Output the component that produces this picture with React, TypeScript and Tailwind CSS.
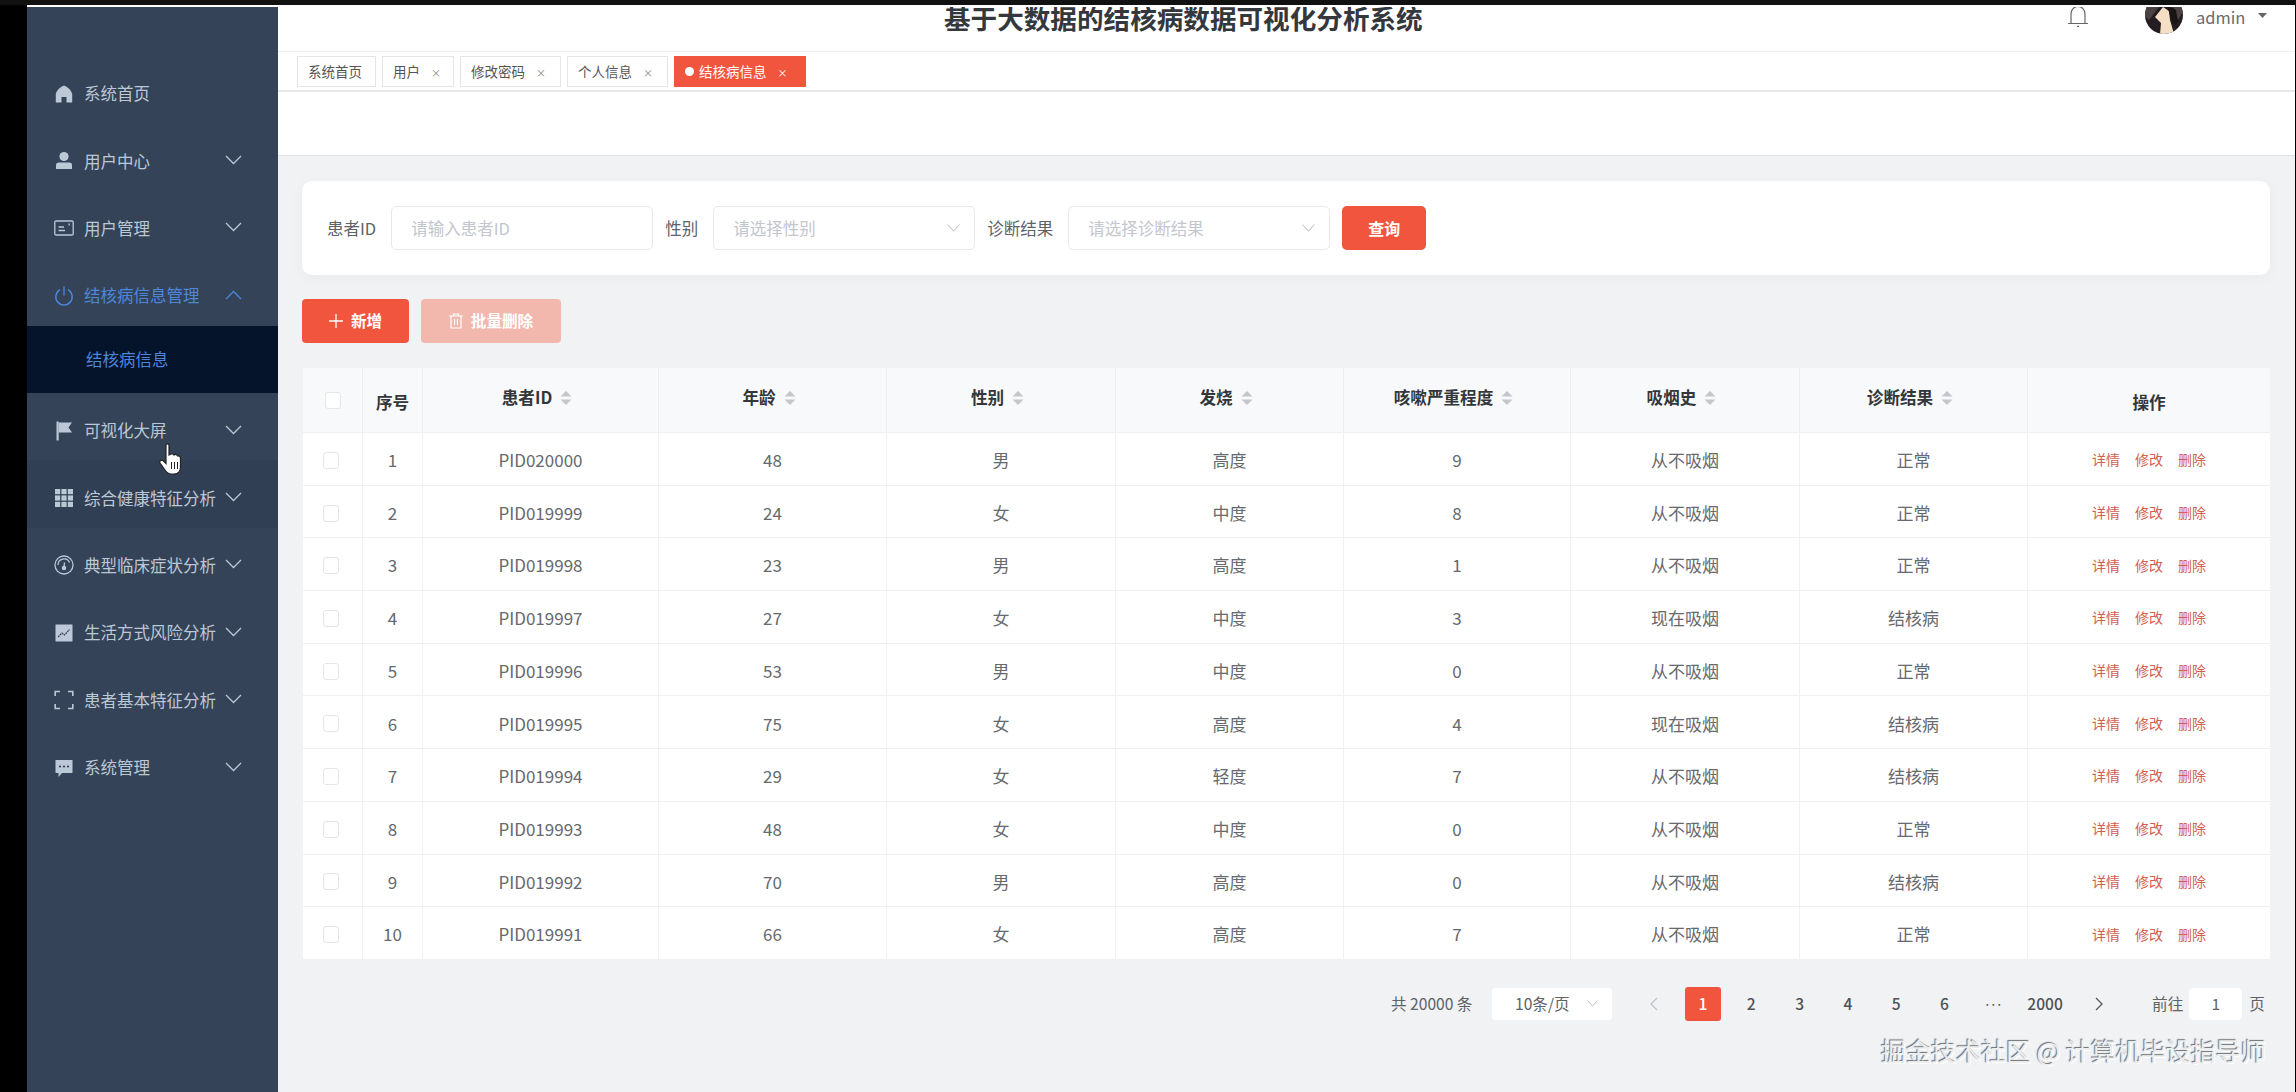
import React from "react";

const FONT = "font-['Noto_Sans_CJK_SC','Noto_Sans',sans-serif]";

const Chevron = ({ up = false }: { up?: boolean }) => (
  <svg width="17" height="10" viewBox="0 0 17 10" fill="none" stroke="currentColor" strokeWidth="1.3" className="shrink-0">
    {up ? <path d="M1 9 L8.5 1.5 L16 9" /> : <path d="M1 1 L8.5 8.5 L16 1" />}
  </svg>
);

const ic = { width: 20, height: 20, viewBox: "0 0 20 20" };
const icons: Record<string, React.ReactNode> = {
  home: (
    <svg {...ic} fill="currentColor"><path d="M10 1.5 C6 3 2.5 6.5 1.8 10 L1.8 18.5 L7.5 18.5 L7.5 13 L12.5 13 L12.5 18.5 L18.2 18.5 L18.2 10 C17.5 6.5 14 3 10 1.5Z" /></svg>
  ),
  user: (
    <svg {...ic} fill="currentColor"><circle cx="10" cy="5.5" r="4.6" /><path d="M2 13.5 C2 12 4 11.5 6 11.5 L14 11.5 C16 11.5 18 12 18 13.5 L18 18 L2 18Z" /></svg>
  ),
  card: (
    <svg {...ic} fill="none" stroke="currentColor" strokeWidth="1.3"><rect x="0.8" y="3" width="18.4" height="14" rx="1.2" /><path d="M4.5 9 H10 M4.5 12.5 H11" /><path d="M14.5 6.5 H15.8" strokeWidth="2" /></svg>
  ),
  power: (
    <svg {...ic} fill="none" stroke="currentColor" strokeWidth="1.4"><path d="M6 3.6 A8.2 8.2 0 1 0 14 3.6" /><path d="M10 0.5 V9.5" /></svg>
  ),
  flag: (
    <svg {...ic} fill="currentColor"><rect x="2.5" y="0.5" width="2.2" height="19" /><path d="M4.7 1.5 H18 L14.5 6.5 L18 11.5 H4.7Z" /></svg>
  ),
  grid: (
    <svg {...ic} fill="currentColor">
      {[1, 7.4, 13.8].flatMap((y) => [1, 7.4, 13.8].map((x) => <rect key={`${x}-${y}`} x={x} y={y} width="5.2" height="5.2" />))}
    </svg>
  ),
  gauge: (
    <svg {...ic} fill="none" stroke="currentColor" strokeWidth="1.3"><circle cx="10" cy="10" r="9" /><path d="M4 10 A6 6 0 0 1 15.5 7.5" /><path d="M10.5 7.5 L10 12" /><circle cx="10" cy="13" r="1.6" fill="currentColor" /></svg>
  ),
  chart: (
    <svg {...ic}><rect x="1.5" y="1.5" width="17" height="17" fill="currentColor" /><path d="M4 14 L8 10 L10.5 12 L15.5 6.5" fill="none" stroke="#344358" strokeWidth="1.2" strokeDasharray="2 0.6" /></svg>
  ),
  full: (
    <svg {...ic} fill="none" stroke="currentColor" strokeWidth="1.6"><path d="M6 1.5 H1.2 V6 M14 1.5 H18.8 V6 M1.2 14 V18.5 H6 M18.8 14 V18.5 H14" /></svg>
  ),
  chat: (
    <svg {...ic} fill="currentColor"><path d="M1.5 2 H18.5 V15 H8 L4.5 19 V15 H1.5Z" /><circle cx="6" cy="8.5" r="1.1" fill="#344358" /><circle cx="10" cy="8.5" r="1.1" fill="#344358" /><circle cx="14" cy="8.5" r="1.1" fill="#344358" /></svg>
  ),
};

const MenuRow = ({ icon, label, arrow = true, active = false, hover = false }: { icon: string; label: string; arrow?: boolean; active?: boolean; hover?: boolean }) => (
  <div className={`flex h-[67.4px] items-center pl-[27px] pr-[36px] pt-[8px] text-[16.5px] ${active ? "text-[#4b87dc]" : "text-[#bcc8d6]"} ${hover ? "bg-[#303f54]" : ""}`}>
    <span className="flex w-[20px] shrink-0 justify-center">{icons[icon]}</span>
    <span className="ml-[10px] flex-1 whitespace-nowrap">{label}</span>
    {arrow && <span className="-mt-[2px] flex"><Chevron up={active} /></span>}
  </div>
);

const Tab = ({ label, w, close = true, active = false }: { label: string; w: string; close?: boolean; active?: boolean }) => (
  <div className={`flex h-[31px] items-center border text-[13.5px] ${w} pl-[10px] ${active ? "border-[#f2553d] bg-[#f2553d] text-white" : "border-[#e3e5e8] bg-white text-[#555]"}`}>
    {active && <span className="mr-[5px] h-[9px] w-[9px] rounded-full bg-white" />}
    <span className="whitespace-nowrap">{label}</span>
    {close && <span className={`ml-[11px] mt-[2px] text-[10px] leading-none ${active ? "text-white" : "text-[#888]"}`}>×</span>}
  </div>
);

const Field = ({ placeholder, select = true }: { placeholder: string; select?: boolean }) => (
  <div className="flex h-[44px] w-[262px] items-center justify-between rounded-[5px] border border-[#e6e8ec] bg-white pl-[19px] pr-[14px] text-[16.5px] text-[#c3c6cc]">
    <span>{placeholder}</span>
    {select && (
      <svg width="13" height="8" viewBox="0 0 13 8" fill="none" stroke="#c4c7cd" strokeWidth="1.1" className="shrink-0"><path d="M0.5 0.5 L6.5 7 L12.5 0.5" /></svg>
    )}
  </div>
);

const Sort = () => (
  <svg width="12" height="16" viewBox="0 0 12 16" fill="#c3c6cc" className="ml-[8px] mt-[1px] shrink-0"><path d="M6 1 L11.5 6.5 H0.5Z" /><path d="M6 15 L11.5 9.5 H0.5Z" /></svg>
);

const GRID = "grid grid-cols-[60px_60px_236px_228px_229px_228px_227px_229px_228px_1fr]";

const headers = ["患者ID", "年龄", "性别", "发烧", "咳嗽严重程度", "吸烟史", "诊断结果"];
const rows: string[][] = [
  ["1", "PID020000", "48", "男", "高度", "9", "从不吸烟", "正常"],
  ["2", "PID019999", "24", "女", "中度", "8", "从不吸烟", "正常"],
  ["3", "PID019998", "23", "男", "高度", "1", "从不吸烟", "正常"],
  ["4", "PID019997", "27", "女", "中度", "3", "现在吸烟", "结核病"],
  ["5", "PID019996", "53", "男", "中度", "0", "从不吸烟", "正常"],
  ["6", "PID019995", "75", "女", "高度", "4", "现在吸烟", "结核病"],
  ["7", "PID019994", "29", "女", "轻度", "7", "从不吸烟", "结核病"],
  ["8", "PID019993", "48", "女", "中度", "0", "从不吸烟", "正常"],
  ["9", "PID019992", "70", "男", "高度", "0", "从不吸烟", "结核病"],
  ["10", "PID019991", "66", "女", "高度", "7", "从不吸烟", "正常"],
];

const Box = () => <span className="block h-[17px] w-[16px] rounded-[3px] border border-[#e4e6ea] bg-white" />;

export default function App() {
  return (
    <div className={`relative h-[1092px] w-[2296px] overflow-hidden bg-black pl-[27px] pt-[5px] ${FONT}`}>
      <div className="absolute left-0 right-0 top-0 h-[5px] bg-[#111]" />
      <div className="flex h-[1087px] w-[2268px] rounded-br-[10px] border-t-2 border-white">
        <aside className="w-[251px] shrink-0 bg-[#344358] pt-[49px]">
          <MenuRow icon="home" label="系统首页" arrow={false} />
          <MenuRow icon="user" label="用户中心" />
          <MenuRow icon="card" label="用户管理" />
          <MenuRow icon="power" label="结核病信息管理" active />
          <div className="flex h-[67.4px] items-center bg-[#05142a] pl-[59px] text-[16.5px] text-[#4d85dc]">结核病信息</div>
          <MenuRow icon="flag" label="可视化大屏" />
          <MenuRow icon="grid" label="综合健康特征分析" hover />
          <MenuRow icon="gauge" label="典型临床症状分析" />
          <MenuRow icon="chart" label="生活方式风险分析" />
          <MenuRow icon="full" label="患者基本特征分析" />
          <MenuRow icon="chat" label="系统管理" />
        </aside>

        <main className="flex min-w-0 flex-1 flex-col bg-[#f1f2f4]">
          <header className="flex h-[45px] shrink-0 items-start overflow-hidden border-b border-[#eceef1] bg-white pl-[666px]">
            <h1 className="mt-[-8px] w-[1123px] whitespace-nowrap text-[26.6px] font-bold leading-[38px] text-[#34383d]">基于大数据的结核病数据可视化分析系统</h1>
            <svg width="22" height="20" viewBox="0 0 22 20" fill="none" stroke="#666" strokeWidth="1.2" className="mt-0 shrink-0">
              <path d="M1 16.5 H21 M4 16.5 V7 A7 7.5 0 0 1 18 7 V16.5" /><path d="M10 19.5 H12" strokeWidth="1.4" />
            </svg>
            <span className="ml-[56px] mt-[-11px] block h-[38px] w-[38px] shrink-0 overflow-hidden rounded-full">
              <svg width="38" height="38" viewBox="0 0 38 38">
                <rect width="38" height="38" fill="#231c20" />
                <path d="M0 0 H38 V16 L33 24 L29 12 L20 9 L14 11 L4 24 L0 20Z" fill="#4a4242" />
                <path d="M10 21 L18 11 L24 15 L25 24 L29 38 L15 38 L16 27Z" fill="#f4dfc4" />
                <path d="M22 10 L31 14 L33 26 L29 30 L26 22Z" fill="#191416" />
              </svg>
            </span>
            <span className="ml-[13px] text-[16.5px] leading-[20px] text-[#666b70]">admin</span>
            <svg width="9" height="5" viewBox="0 0 9 5" fill="#666" className="ml-[13px] mt-[6px] shrink-0"><path d="M0 0 H9 L4.5 5Z" /></svg>
          </header>

          <div className="flex h-[40px] shrink-0 gap-[6px] border-b-2 border-[#e6e7ea] bg-white pl-[19px] pt-[4px]">
            <Tab label="系统首页" w="w-[79px]" close={false} />
            <Tab label="用户" w="w-[72px]" />
            <Tab label="修改密码" w="w-[101px]" />
            <Tab label="个人信息" w="w-[101px]" />
            <Tab label="结核病信息" w="w-[132px]" active />
          </div>

          <div className="h-[64px] shrink-0 border-b border-[#e0e2e5] bg-white" />

          <div className="flex min-h-0 flex-1 flex-col pl-[24px] pr-[25px] pt-[25px]">
            <section className="flex h-[94px] shrink-0 items-center rounded-[10px] bg-white pl-[25px] text-[16.5px] text-[#5f6266] shadow-[0_3px_14px_rgba(0,0,0,0.04)]">
              <span className="mr-[15px]">患者ID</span>
              <Field placeholder="请输入患者ID" select={false} />
              <span className="ml-[12px] mr-[15px]">性别</span>
              <Field placeholder="请选择性别" />
              <span className="ml-[12px] mr-[15px]">诊断结果</span>
              <Field placeholder="请选择诊断结果" />
              <button className="ml-[12px] h-[44px] w-[84px] rounded-[5px] bg-[#f2553d] text-[16px] font-bold text-white">查询</button>
            </section>

            <div className="mt-[24px] flex h-[44px] shrink-0 gap-[12px] text-[15.6px] font-bold text-white">
              <button className="flex w-[107px] items-center justify-center gap-[8px] rounded-[4px] bg-[#f2553d]">
                <svg width="14" height="14" viewBox="0 0 14 14" stroke="white" strokeWidth="1.3"><path d="M7 0 V14 M0 7 H14" /></svg>
                新增
              </button>
              <button className="flex w-[140px] items-center justify-center gap-[8px] rounded-[4px] bg-[#f2b8ad]">
                <svg width="14" height="16" viewBox="0 0 14 16" fill="none" stroke="white" strokeWidth="1.2"><path d="M0 3 H14 M4.5 3 V1 H9.5 V3 M2 3 V15 H12 V3 M5.5 6 V12 M8.5 6 V12" /></svg>
                批量删除
              </button>
            </div>

            <div className="mt-[25px] shrink-0 pl-[1px]">
              <div className={`${GRID} h-[65px] border-b border-[#eceef2] bg-[#f8f9fa] text-[16.6px] font-bold text-[#33363a]`}>
                <div className="flex items-center justify-center border-r border-[#eceef2] pt-[1px]"><Box /></div>
                <div className="flex items-center justify-center border-r border-[#eceef2] pt-[5px]">序号</div>
                {headers.map((h) => (
                  <div key={h} className="flex items-center justify-center border-r border-[#eceef2] pb-[5px] pr-[7px]">
                    <span className="whitespace-nowrap">{h}</span>
                    <Sort />
                  </div>
                ))}
                <div className="flex items-center justify-center pt-[5px]">操作</div>
              </div>
              {rows.map((r) => (
                <div key={r[0]} className={`${GRID} h-[52.7px] border-b border-[#eef0f3] bg-white text-[17px] text-[#66696e]`}>
                  <div className="flex items-center justify-center border-r border-[#f0f1f4] pr-[4px] pt-[3px]"><Box /></div>
                  {r.map((c, i) => (
                    <div key={i} className="flex items-center justify-center border-r border-[#f0f1f4] pt-[2px]">{c}</div>
                  ))}
                  <div className="flex items-center justify-center gap-[15px] pt-[2px] text-[14px] text-[#d2604f]">
                    <span>详情</span>
                    <span>修改</span>
                    <span>删除</span>
                  </div>
                </div>
              ))}
            </div>

            <div className="mt-[27px] flex h-[34px] shrink-0 items-center pl-[1089px] text-[15.6px] text-[#606266]">
              <span className="w-[101px] whitespace-nowrap">共 20000 条</span>
              <div className="flex h-[32px] w-[120px] items-center justify-between rounded-[4px] bg-white pl-[23px] pr-[14px]">
                <span className="whitespace-nowrap">10条/页</span>
                <span className="text-[#c0c4cc]"><svg width="11" height="7" viewBox="0 0 11 7" fill="none" stroke="currentColor"><path d="M0.5 0.5 L5.5 6 L10.5 0.5" /></svg></span>
              </div>
              <svg width="9" height="14" viewBox="0 0 9 14" fill="none" stroke="#bfc3c9" strokeWidth="1.3" className="ml-[37px]"><path d="M8 1 L2 7 L8 13" /></svg>
              <div className="ml-[27px] flex gap-[12.3px] font-medium text-[#4f5256]">
                <span className="flex h-[34px] w-[36px] items-center justify-center rounded-[3px] bg-[#f2553d] text-white">1</span>
                {["2", "3", "4", "5", "6"].map((n) => (
                  <span key={n} className="flex h-[34px] w-[36px] items-center justify-center">{n}</span>
                ))}
                <span className="flex h-[34px] w-[36px] items-center justify-center text-[7px] font-bold tracking-[-1px]">•••</span>
                <span className="flex h-[34px] w-[44px] items-center justify-center">2000</span>
              </div>
              <svg width="9" height="14" viewBox="0 0 9 14" fill="none" stroke="#55585c" strokeWidth="1.3" className="ml-[28px]"><path d="M1 1 L7 7 L1 13" /></svg>
              <span className="ml-[48px]">前往</span>
              <span className="ml-[6px] flex h-[32px] w-[53px] items-center justify-center rounded-[4px] bg-white">1</span>
              <span className="ml-[7px]">页</span>
            </div>
          </div>
        </main>
      </div>

      <svg width="26" height="32" viewBox="0 0 26 32" className="absolute left-[159px] top-[443px]">
        <path d="M7 2 C7 0.5 10 0.5 10 2 L10 12 L12 11 C13.5 10.5 14.5 11 15 12 C16.5 11 18 11.5 18.5 13 C20 12.5 21.5 13.5 21.5 15.5 L21.5 24 C21.5 28 19 31 15 31 L12 31 C9 31 7.5 29 6 27 L1 20 C0 18 2.5 16 4.5 18 L7 20.5Z" fill="white" stroke="#222" strokeWidth="1.2" />
        <path d="M12.5 19 V26 M15.5 19 V26 M18.5 19 V26" stroke="#222" strokeWidth="1" />
      </svg>

      <div className="absolute left-[1881px] top-[1033px] whitespace-nowrap text-[25px] leading-[34px] text-[#eceded] [text-shadow:-1px_-1px_1px_#6a6d72,1px_1px_0_#ffffff]">掘金技术社区 @ 计算机毕设指导师</div>
    </div>
  );
}
